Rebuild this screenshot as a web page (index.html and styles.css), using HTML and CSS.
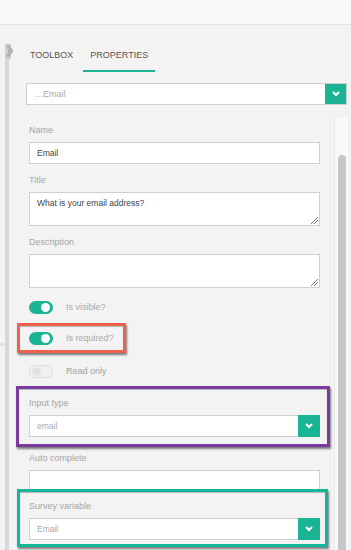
FILE: index.html
```html
<!DOCTYPE html>
<html>
<head>
<meta charset="utf-8">
<link rel="stylesheet" href="styles.css">
</head>
<body>
<div class="topbar"></div>
<div class="layout">
  <div class="strip">
    <svg class="strip-icon" width="10" height="15" viewBox="0 0 10 15"><rect x="0" y="0" width="6" height="15" fill="#d2d2d2"/><polygon points="1,1 4,1 8,6 8,8 4,13 1,13 3,8 3,6" fill="#b3b3b3"/></svg>
    <span class="resize">‹›</span>
  </div>
  <div class="panel">
    <div class="tabs">
      <div class="tab">TOOLBOX</div>
      <div class="tab active">PROPERTIES</div>
    </div>
    <div class="objsel">
      <span class="objsel-text">…Email</span>
      <span class="objsel-btn"><svg width="8" height="6" viewBox="0 0 8 6"><polyline points="1,1 4,4 7,1" fill="none" stroke="#fff" stroke-width="2"/></svg></span>
    </div>
    <div class="scroll">
      <div class="form">
        <div class="field">
          <div class="label">Name</div>
          <div class="input">Email</div>
        </div>
        <div class="field">
          <div class="label">Title</div>
          <div class="input area">What is your email address?<span class="grip"></span></div>
        </div>
        <div class="field">
          <div class="label">Description</div>
          <div class="input area"><span class="grip"></span></div>
        </div>
        <div class="toggle-row first">
          <span class="toggle on"><span class="knob"></span></span>
          <span class="tlabel">Is visible?</span>
        </div>
        <div class="hl hl-red">
          <div class="toggle-row">
            <span class="toggle on"><span class="knob"></span></span>
            <span class="tlabel">Is required?</span>
          </div>
        </div>
        <div class="toggle-row readonly">
          <span class="toggle off"><span class="knob"></span></span>
          <span class="tlabel">Read only</span>
        </div>
        <div class="hl hl-purple">
          <div class="label">Input type</div>
          <div class="input select"><span class="sel-text">email</span><span class="sel-btn"><svg width="8" height="6" viewBox="0 0 8 6"><polyline points="1,1 4,4 7,1" fill="none" stroke="#fff" stroke-width="2"/></svg></span></div>
        </div>
        <div class="field auto">
          <div class="label">Auto complete</div>
          <div class="input"></div>
        </div>
        <div class="hl hl-teal">
          <div class="label">Survey variable</div>
          <div class="input select"><span class="sel-text">Email</span><span class="sel-btn"><svg width="8" height="6" viewBox="0 0 8 6"><polyline points="1,1 4,4 7,1" fill="none" stroke="#fff" stroke-width="2"/></svg></span></div>
        </div>
      </div>
      <div class="track"><div class="thumb"></div></div>
    </div>
  </div>
</div>
</body>
</html>
```
FILE: styles.css
```css
* { box-sizing: border-box; }
html, body { margin: 0; padding: 0; }
body {
  width: 351px;
  height: 550px;
  overflow: hidden;
  background: #f3f3f3;
  font-family: "Liberation Sans", Arial, sans-serif;
  font-size: 9px;
  color: #444;
}
.topbar {
  height: 25px;
  background: #f7f8fa;
  border-bottom: 1px solid #e3e3e3;
}
.layout { display: flex; }
.strip {
  position: relative;
  width: 4px;
  margin-left: 5px;
  margin-top: 19px;
  height: 506px;
  background: #d7d7d7;
  flex: none;
}
.strip-icon { position: absolute; left: 0; top: 0; }
.resize {
  position: absolute;
  left: -5px;
  top: 296px;
  font-size: 8px;
  color: #c4c4c4;
  letter-spacing: -1px;
  background: #f3f3f3;
  line-height: 10px;
}
.panel {
  flex: 1;
  padding-left: 14px;
  min-width: 0;
}
.tabs {
  display: flex;
  gap: 3px;
  margin-top: 21px;
}
.tab {
  padding: 0 7px 6px;
  line-height: 18px;
  font-size: 9px;
  color: #555;
  border-bottom: 2px solid transparent;
}
.tab.active { border-bottom-color: #1ab394; }
.objsel {
  display: flex;
  align-items: stretch;
  height: 22px;
  margin: 11px 4px 0 3px;
  background: #fff;
  border: 1px solid #cfcfcf;
}
.objsel-text {
  flex: 1;
  padding-left: 7px;
  line-height: 20px;
  color: #aaa;
}
.objsel-btn, .sel-btn {
  width: 21px;
  background: #1ab394;
  display: flex;
  align-items: center;
  justify-content: center;
}
.scroll {
  display: flex;
  margin-top: 13px;
  margin-left: -14px;
}
.form {
  flex: 1;
  padding: 6px 14px 0 20px;
}
.field { margin-bottom: 10px; }
.label {
  line-height: 12px;
  margin-bottom: 6px;
  color: #a5a5a5;
  font-size: 9px;
}
.input {
  position: relative;
  height: 22px;
  background: #fff;
  border: 1px solid #cfcfcf;
  padding-left: 7px;
  line-height: 20px;
  color: #444;
  font-size: 8.5px;
}
.input.area {
  height: 34px;
  line-height: 11px;
  padding-top: 5px;
}
.grip {
  position: absolute;
  right: 1px;
  bottom: 1px;
  width: 7px;
  height: 7px;
  background: linear-gradient(135deg, transparent 45%, #777 46%, #777 52%, transparent 53%, transparent 70%, #777 71%, #777 77%, transparent 78%);
}
.input.select {
  display: flex;
  padding-left: 0;
}
.sel-text {
  flex: 1;
  padding-left: 7px;
  color: #aaa;
}
.select .sel-btn { margin: -1px -1px -1px 0; width: 22px; }
.toggle-row {
  display: flex;
  align-items: center;
  height: 14px;
}
.toggle-row.first { margin-top: 12px; }
.toggle {
  position: relative;
  width: 24px;
  height: 13px;
  border-radius: 7px;
  flex: none;
}
.toggle.on { background: #1ab394; }
.toggle.off { background: #f0f0f0; border: 1px solid #dcdcdc; }
.knob {
  position: absolute;
  top: 2px;
  width: 9px;
  height: 9px;
  border-radius: 50%;
}
.toggle.on .knob { right: 3px; background: #fff; }
.toggle.off .knob { left: 2px; top: 1px; background: #e2e2e2; }
.tlabel {
  margin-left: 13px;
  color: #a9a9a9;
  font-size: 9px;
}
.readonly .tlabel { color: #a0a0a0; }
.hl {
  position: relative;
  z-index: 1;
  border: 3px solid;
  background: #f3f3f3;
  box-shadow: 1px 2px 2px rgba(0,0,0,0.5), inset 0 1px 1px rgba(0,0,0,0.25);
}
.hl-red {
  border-color: #f0604e;
  width: 109px;
  height: 30px;
  margin: 9px 0 0 -12px;
  padding: 5px 0 0 9px;
}
.readonly { margin-top: 11px; }
.hl-purple {
  border-color: #7b3b9e;
  margin: 8px -10px 0 -13px;
  padding: 8px 7px 7px 10px;
}
.field.auto { margin-top: 5px; margin-bottom: 0; }
.hl-teal {
  border-color: #12b69a;
  margin: -3px -8px 0 -12px;
  padding: 8px 5px 4px 9px;
}
.track {
  width: 14px;
  height: 440px;
  margin-right: 3px;
  background: #f9f9f9;
  border-left: 1px solid #e8e8e8;
  padding-top: 37px;
  padding-left: 3px;
}
.thumb {
  width: 8px;
  height: 420px;
  border-radius: 4px;
  background: #c7c7c7;
}
```
